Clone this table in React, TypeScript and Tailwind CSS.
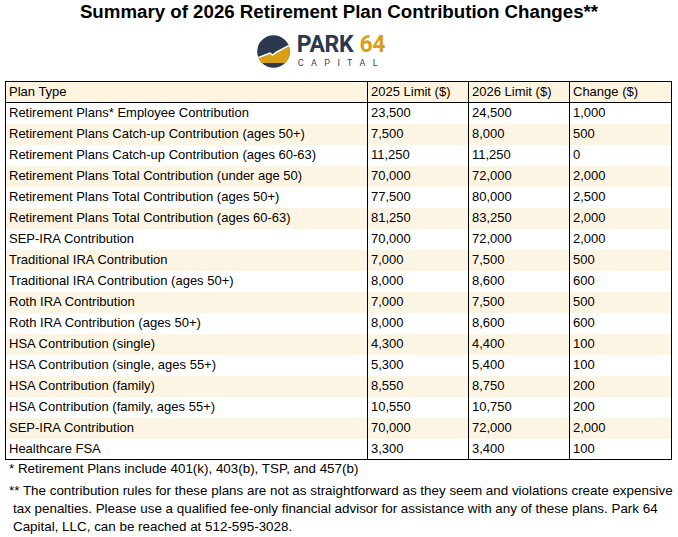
import React from "react";

const rows: [string, string, string, string][] = [
  ["Retirement Plans* Employee Contribution", "23,500", "24,500", "1,000"],
  ["Retirement Plans Catch-up Contribution (ages 50+)", "7,500", "8,000", "500"],
  ["Retirement Plans Catch-up Contribution (ages 60-63)", "11,250", "11,250", "0"],
  ["Retirement Plans Total Contribution (under age 50)", "70,000", "72,000", "2,000"],
  ["Retirement Plans Total Contribution (ages 50+)", "77,500", "80,000", "2,500"],
  ["Retirement Plans Total Contribution (ages 60-63)", "81,250", "83,250", "2,000"],
  ["SEP-IRA Contribution", "70,000", "72,000", "2,000"],
  ["Traditional IRA Contribution", "7,000", "7,500", "500"],
  ["Traditional IRA Contribution (ages 50+)", "8,000", "8,600", "600"],
  ["Roth IRA Contribution", "7,000", "7,500", "500"],
  ["Roth IRA Contribution (ages 50+)", "8,000", "8,600", "600"],
  ["HSA Contribution (single)", "4,300", "4,400", "100"],
  ["HSA Contribution (single, ages 55+)", "5,300", "5,400", "100"],
  ["HSA Contribution (family)", "8,550", "8,750", "200"],
  ["HSA Contribution (family, ages 55+)", "10,550", "10,750", "200"],
  ["SEP-IRA Contribution", "70,000", "72,000", "2,000"],
  ["Healthcare FSA", "3,300", "3,400", "100"],
];

function Logo() {
  return (
    <div className="flex items-center gap-[7px]">
      <svg width="33" height="33" viewBox="0 0 33 33">
        <defs>
          <clipPath id="c">
            <circle cx="16.5" cy="16.5" r="16.3" />
          </clipPath>
        </defs>
        <g clipPath="url(#c)">
          <rect x="0" y="0" width="33" height="33" fill="#2b3850" />
          <path d="M0 23 L13 18 L15.5 20 L19 17.5 L33 10 L33 28 L0 28 Z" fill="#d99f16" />
          <path d="M0 23 L13 18 L15.5 20 L19 17.5 L33 10" stroke="#ffffff" strokeWidth="1.5" fill="none" />
        </g>
      </svg>
      <div className="flex flex-col" style={{ fontFamily: 'Roboto, "Liberation Sans", sans-serif' }}>
        <div className="text-[23px] leading-[20px] font-bold tracking-[-0.3px] whitespace-nowrap">
          <span className="text-[#2b3850]">PARK</span>
          <span className="text-[#d99f16] ml-[6px]">64</span>
        </div>
        <div className="text-[9px] leading-[9px] tracking-[7.4px] text-[#3b4456] mt-[4px] pl-[1px]">
          CAPITAL
        </div>
      </div>
    </div>
  );
}

export default function App() {
  return (
    <div className="w-[678px] h-[537px] bg-white text-black" style={{ fontFamily: '"Liberation Sans", Arial, sans-serif' }}>
      <h1 className="text-center font-bold text-[18.7px] leading-[22px] pt-[1px]">
        Summary of 2026 Retirement Plan Contribution Changes**
      </h1>
      <div className="flex justify-center mt-[12px] pr-[36px]">
        <Logo />
      </div>
      <div className="px-[5px] mt-[13px]">
        <table className="w-[666px] border-collapse text-[13px] leading-[20px] border border-black table-fixed">
          <colgroup>
            <col className="w-[362px]" />
            <col className="w-[101px]" />
            <col className="w-[101px]" />
            <col className="w-[102px]" />
          </colgroup>
          <thead>
            <tr className="bg-[#fdf4df] border-b border-black">
              <th className="h-[21px] font-normal text-left px-[3px] border-r border-black">Plan Type</th>
              <th className="h-[21px] font-normal text-left px-[3px] border-r border-black">2025 Limit ($)</th>
              <th className="h-[21px] font-normal text-left px-[3px] border-r border-black">2026 Limit ($)</th>
              <th className="h-[21px] font-normal text-left px-[3px]">Change ($)</th>
            </tr>
          </thead>
          <tbody>
            {rows.map((r, i) => (
              <tr key={i} className={i % 2 === 1 ? "bg-[#fdf5e3]" : "bg-white"}>
                <td className="h-[21px] px-[3px] border-r border-black">{r[0]}</td>
                <td className="h-[21px] px-[3px] border-r border-black">{r[1]}</td>
                <td className="h-[21px] px-[3px] border-r border-black">{r[2]}</td>
                <td className="h-[21px] px-[3px]">{r[3]}</td>
              </tr>
            ))}
          </tbody>
        </table>
      </div>
      <div className="text-[13.4px] leading-[18px]">
        <p className="pl-[9px]">* Retirement Plans include 401(k), 403(b), TSP, and 457(b)</p>
        <p className="mt-[4px] pl-[13px] pr-[4px] -indent-[4px]">
          ** The contribution rules for these plans are not as straightforward as they seem and violations create expensive tax penalties. Please use a qualified fee-only financial advisor for assistance with any of these plans. Park 64 Capital, LLC, can be reached at 512-595-3028.
        </p>
      </div>
    </div>
  );
}
